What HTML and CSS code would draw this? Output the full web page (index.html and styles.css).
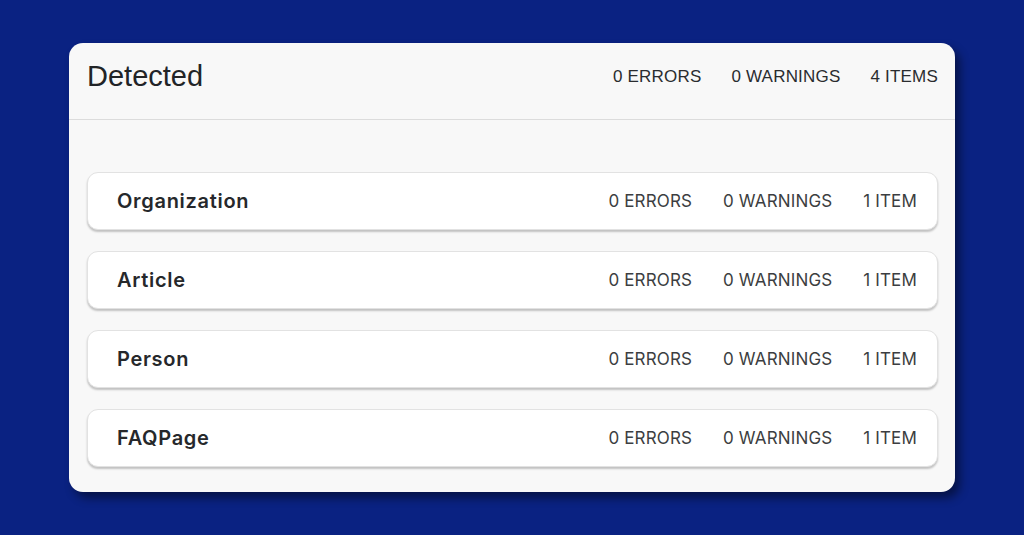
FILE: index.html
```html
<!DOCTYPE html>
<html>
<head>
<meta charset="utf-8">
<link rel="stylesheet" href="styles.css">
</head>
<body>
<div class="panel">
  <div class="panel-head">
    <h1 class="title">Detected</h1>
    <div class="stats">
      <span>0 ERRORS</span>
      <span>0 WARNINGS</span>
      <span>4 ITEMS</span>
    </div>
  </div>
  <div class="list">
    <div class="row">
      <span class="name">Organization</span>
      <div class="row-stats"><span>0 ERRORS</span><span>0 WARNINGS</span><span>1 ITEM</span></div>
    </div>
    <div class="row">
      <span class="name">Article</span>
      <div class="row-stats"><span>0 ERRORS</span><span>0 WARNINGS</span><span>1 ITEM</span></div>
    </div>
    <div class="row">
      <span class="name">Person</span>
      <div class="row-stats"><span>0 ERRORS</span><span>0 WARNINGS</span><span>1 ITEM</span></div>
    </div>
    <div class="row">
      <span class="name">FAQPage</span>
      <div class="row-stats"><span>0 ERRORS</span><span>0 WARNINGS</span><span>1 ITEM</span></div>
    </div>
  </div>
</div>
</body>
</html>
```

FILE: styles.css
```css
html, body {
  margin: 0;
  padding: 0;
}
body {
  background: #0a2282;
  width: 1024px;
  height: 535px;
  padding: 43px 69px 0 69px;
  box-sizing: border-box;
  font-family: "Liberation Sans", Arial, sans-serif;
}
.panel {
  width: 886px;
  height: 449px;
  background: #f8f8f8;
  border-radius: 14px;
  box-shadow: 5px 6px 10px rgba(0, 0, 0, 0.45);
  box-sizing: border-box;
  display: flex;
  flex-direction: column;
}
.panel-head {
  height: 77px;
  border-bottom: 1px solid #dcdcdc;
  box-sizing: border-box;
  display: flex;
  align-items: center;
  justify-content: space-between;
  padding: 0 17px 9px 18px;
}
.title {
  margin: 0;
  font-weight: 400;
  font-size: 29px;
  color: #222427;
}
.stats {
  display: flex;
  gap: 30px;
  font-size: 17px;
  letter-spacing: 0.2px;
  color: #2a2c2f;
  padding-top: 1px;
}
.list {
  display: flex;
  flex-direction: column;
  gap: 21px;
  padding: 52px 17px 0 18px;
}
.row {
  height: 58px;
  background: #ffffff;
  border: 1px solid #e2e2e2;
  border-radius: 11px;
  box-shadow: 0 2px 2px rgba(0, 0, 0, 0.22);
  box-sizing: border-box;
  display: flex;
  align-items: center;
  justify-content: space-between;
  padding: 0 20px 0 29px;
}
.name {
  font-family: Inter, "Noto Sans", sans-serif;
  font-weight: 600;
  font-size: 20px;
  letter-spacing: 0.7px;
  color: #26282b;
}
.row-stats {
  display: flex;
  gap: 31px;
  font-family: Inter, "Noto Sans", sans-serif;
  font-weight: 400;
  font-size: 17px;
  letter-spacing: 0.15px;
  color: #3c3e41;
}
```
